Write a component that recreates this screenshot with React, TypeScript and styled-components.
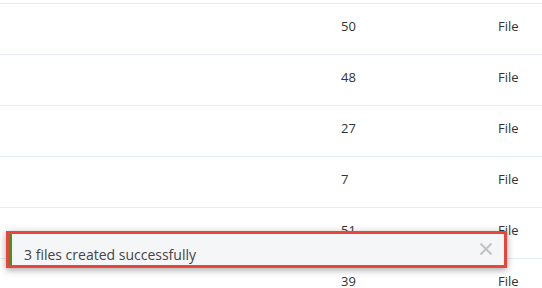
import React from "react";
import styled, { createGlobalStyle } from "styled-components";

const Global = createGlobalStyle`
  html, body { margin: 0; padding: 0; background: #ffffff; }
  body { font-family: "Open Sans", "Noto Sans", sans-serif; overflow: hidden; }
`;

const Table = styled.div`
  display: flex;
  flex-direction: column;
  padding-top: 3px;
`;

const Row = styled.div`
  display: grid;
  grid-template-columns: 341px 157px 1fr;
  height: 50px;
  border-top: 1px solid #e6ecf2;
  box-sizing: content-box;
`;

const Cell = styled.div`
  padding-top: 12px;
  font-size: 13px;
  line-height: 20px;
  color: #333333;
`;

const Toast = styled.div`
  position: fixed;
  left: 6px;
  top: 231px;
  width: 501px;
  height: 37px;
  box-sizing: border-box;
  border: 3px solid #e8463d;
  box-shadow: 0 2px 7px rgba(0, 0, 0, 0.35);
  display: flex;
`;

const ToastBody = styled.div`
  position: relative;
  flex: 1;
  display: flex;
  background: #f5f6f8;
  border-left: 3px solid #3a9a1e;
  padding: 11px 12px 0;
`;

const Message = styled.div`
  font-size: 14px;
  line-height: 20px;
  color: #444444;
`;

const Close = styled.button`
  position: absolute;
  top: 8px;
  right: 10px;
  width: 16px;
  height: 14px;
  padding: 0;
  border: 0;
  background: transparent;
  display: flex;
  align-items: center;
  justify-content: center;
`;

const rows = ["50", "48", "27", "7", "51", "39"];

export default function App() {
  return (
    <>
      <Global />
      <Table>
        {rows.map((n, i) => (
          <Row key={i}>
            <Cell />
            <Cell>{n}</Cell>
            <Cell>File</Cell>
          </Row>
        ))}
      </Table>
      <Toast>
        <ToastBody>
          <Message>3 files created successfully</Message>
          <Close aria-label="close">
            <svg width="14" height="12" viewBox="0 0 14 12">
              <path d="M1.5 0.5 L12.5 11.5 M12.5 0.5 L1.5 11.5" stroke="#c2c2c2" strokeWidth="2" fill="none" />
            </svg>
          </Close>
        </ToastBody>
      </Toast>
    </>
  );
}
